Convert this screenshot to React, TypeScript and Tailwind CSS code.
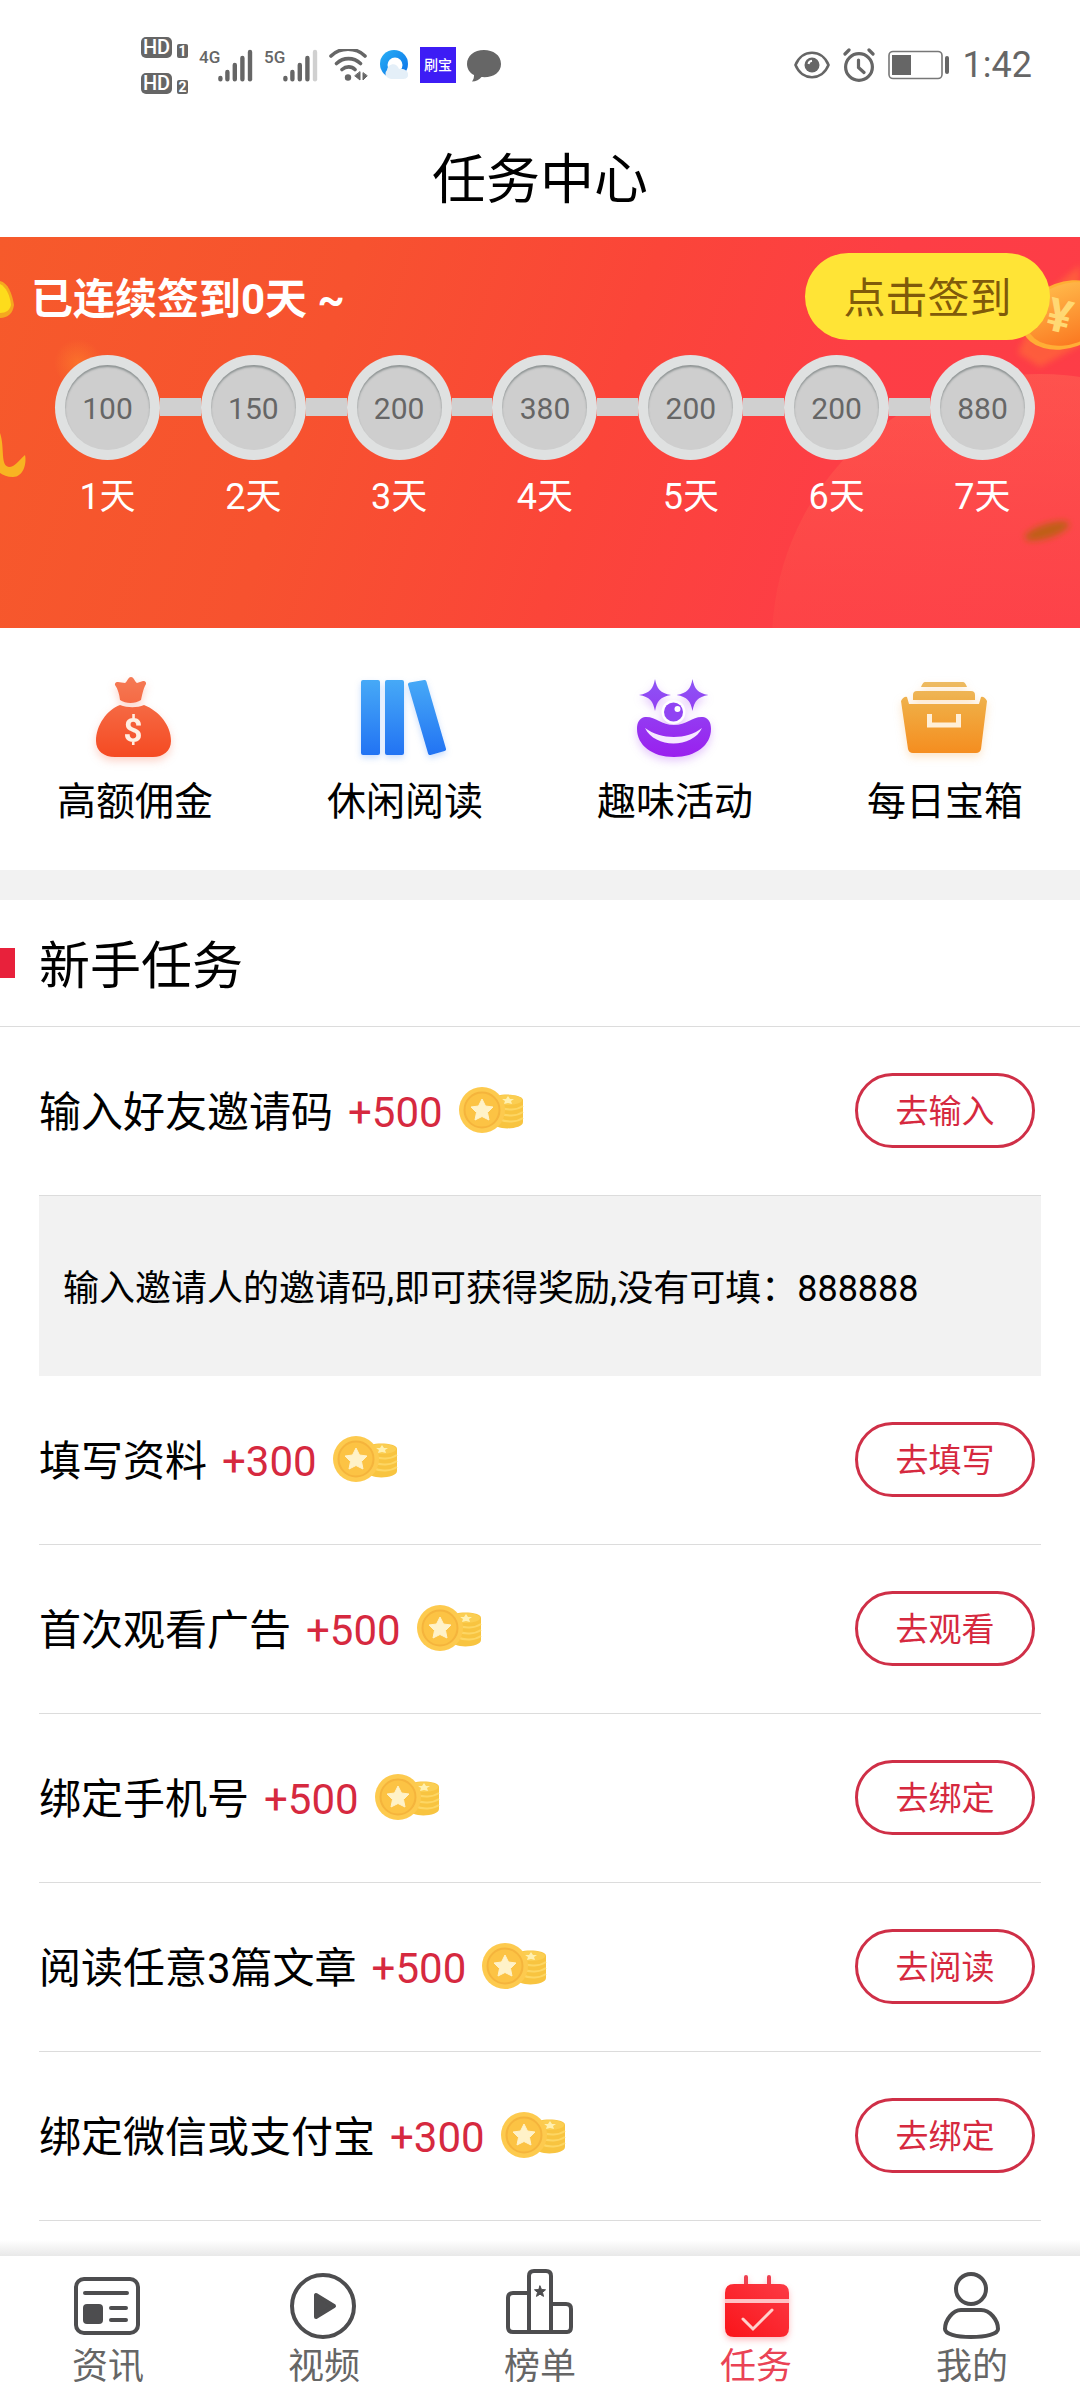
import clsx from "clsx";
import React from "react";

const checkInDays = [
  { day: 1, coins: 100 },
  { day: 2, coins: 150 },
  { day: 3, coins: 200 },
  { day: 4, coins: 380 },
  { day: 5, coins: 200 },
  { day: 6, coins: 200 },
  { day: 7, coins: 880 },
];

const tasks = [
  {
    name: "输入好友邀请码",
    reward: 500,
    action: "去输入",
    hint: "输入邀请人的邀请码,即可获得奖励,没有可填：888888",
  },
  { name: "填写资料", reward: 300, action: "去填写" },
  { name: "首次观看广告", reward: 500, action: "去观看" },
  { name: "绑定手机号", reward: 500, action: "去绑定" },
  { name: "阅读任意3篇文章", reward: 500, action: "去阅读" },
  { name: "绑定微信或支付宝", reward: 300, action: "去绑定" },
];

// --- Status bar ---
const SimBadge = ({ slot }: { slot: number }) => (
  <div className="flex items-end gap-[5px]">
    <span className="flex h-[21px] w-[31px] items-center justify-center rounded-[5px] bg-[#666] text-[20px] font-medium leading-none text-white">
      HD
    </span>
    <span className="flex h-[14px] w-[11px] items-center justify-center rounded-[2px] bg-[#666] text-[14px] font-bold leading-none text-white">
      {slot}
    </span>
  </div>
);

const Signal = ({ label, weak }: { label: string; weak?: boolean }) => (
  <div className="flex h-[33px] w-[54px] items-start justify-between text-[17px] font-medium leading-none">
    <span>{label}</span>
    <svg width="35" height="33" viewBox="0 0 35 33" className="-ml-1 shrink-0" strokeWidth="4.4" strokeLinecap="round" stroke="#666">
      <path d="M2.4 29v1.2M9.4 23v7.2M16.8 16v14.2M24.4 9v21.2" />
      <path d="M32 3v27.2" stroke={weak ? "#d0d0d0" : "#666"} />
    </svg>
  </div>
);

const StatusBar = () => (
  <div className="flex h-[118px] items-center justify-between pl-[141px] pr-[48px] pt-3 text-[#666]">
    <div className="flex items-center gap-[11px]">
      <div className="flex w-[47px] flex-col gap-[15px]">
        <SimBadge slot={1} />
        <SimBadge slot={2} />
      </div>
      <Signal label="4G" />
      <Signal label="5G" weak />
      <svg width="39" height="33" viewBox="0 0 39 33" fill="none" stroke="#666" strokeWidth="3.6" strokeLinecap="round">
        <path d="M2 7C11-2 27-2 36 7M7.5 14.500c7-6.500 17-6.500 24 0M13 20.500c4-3.500 9.500-3.500 13 0" />
        <circle cx="19" cy="28.500" r="3.200" fill="#666" stroke="none" />
        <path d="M31 23v8l-5-4zM34 24v7l4-4z" fill="#666" stroke="#666" strokeWidth="1" />
      </svg>
      <svg width="30" height="33" viewBox="0 0 30 33">
        <defs>
          <linearGradient id="ring" x1="0" y1="0" x2="1" y2="1">
            <stop offset="0" stopColor="#28b0f5" />
            <stop offset="1" stopColor="#0a6fe8" />
          </linearGradient>
        </defs>
        <circle cx="15" cy="15" r="14" fill="url(#ring)" />
        <circle cx="16" cy="16" r="7.500" fill="#fff" />
        <path d="M9 29a5 5 0 0 1-1-8c1-7 10-8 12-1 5-1 10 2 9 7-1 3-4 3-6 3H12z" fill="#e4eff8" />
      </svg>
      <span className="flex h-[36px] w-[36px] items-center justify-center bg-[#3d1cf5] text-[14px] font-medium leading-none text-white">
        刷宝
      </span>
      <svg width="34" height="33" viewBox="0 0 34 33" fill="#666">
        <path d="M17 1C7 1 0 7 0 15c0 5 3 9 7 11 0 3-.5 4.500-2 6.500 4 0 7.500-2 9.500-4.500 11 1 19.500-4 19.500-13S26 1 17 1z" />
      </svg>
    </div>

    <div className="flex items-center gap-[13px]">
      <svg width="36" height="28" viewBox="0 0 36 28" fill="none" stroke="#666" strokeWidth="2.600">
        <path d="M1.500 14C8-2.300 28-2.300 34.500 14 28 30.300 8 30.300 1.500 14z" />
        <circle cx="18" cy="14" r="7.500" fill="#666" stroke="none" />
        <path d="M14.500 13c.3-2 1.500-3 3.500-3.200" stroke="#fff" strokeWidth="2" />
      </svg>
      <svg width="32" height="34" viewBox="0 0 32 34" fill="none" stroke="#666" strokeWidth="3.200" strokeLinecap="round">
        <circle cx="16" cy="19" r="13.400" />
        <path d="M15.500 12v7.500l5.500 5M2 6l4-4M30 6l-4-4" />
      </svg>
      <svg width="62" height="30" viewBox="0 0 62 30">
        <rect x="1" y="1.500" width="53" height="27" rx="4" fill="none" stroke="#777" strokeWidth="1.600" />
        <rect x="4" y="5" width="19" height="20" fill="#666" />
        <rect x="57" y="6" width="4" height="18" rx="2" fill="#666" />
      </svg>
      <span className="text-[36px] leading-none">1:42</span>
    </div>
  </div>
);

// --- Check-in banner ---
const BannerArt = () => (
  <>
    <svg className="absolute left-0 top-0" width="140" height="391" viewBox="0 0 140 391">
      <defs>
        <radialGradient id="glow">
          <stop offset="0" stopColor="#ff8a2a" stopOpacity="0.500" />
          <stop offset="1" stopColor="#ff8a2a" stopOpacity="0" />
        </radialGradient>
      </defs>
      <circle cx="78" cy="126" r="24" fill="url(#glow)" />
      <path d="M0 44c8 2 12 12 14 24-1 8-6 13-14 13z" fill="#f5a81f" />
      <path d="M0 47c6 3 10 11 11 21-1 5-5 8-11 8z" fill="#fddc1c" />
      <path d="M0 196c5 14 0 33 9 34 6 0 9-6 16-12 2 9-2 22-12 22-6 0-10-2-13-4z" fill="#f8b422" />
    </svg>
    <svg className="absolute right-0 top-0" width="360" height="391" viewBox="0 0 360 391">
      <defs>
        <linearGradient id="hill" x1="0" y1="0" x2="0" y2="1">
          <stop offset="0" stopColor="#ff7a5a" stopOpacity="0.350" />
          <stop offset="0.550" stopColor="#ff6a50" stopOpacity="0.080" />
        </linearGradient>
        <linearGradient id="yen" x1="0" y1="0" x2="0" y2="1">
          <stop offset="0" stopColor="#ffb648" />
          <stop offset="1" stopColor="#fb7a22" />
        </linearGradient>
        <filter id="soft" x="-50%" y="-50%" width="200%" height="200%">
          <feGaussianBlur stdDeviation="3" />
        </filter>
      </defs>
      <circle cx="320" cy="405" r="268" fill="url(#hill)" />
      <path d="M322 60 360 28v80l-40 22-22-14z" fill="#ff8330" opacity="0.450" filter="url(#soft)" />
      <ellipse cx="346" cy="78" rx="46" ry="33" transform="rotate(-20 346 78)" fill="#ffae35" />
      <ellipse cx="348" cy="77" rx="43" ry="30" transform="rotate(-20 348 77)" fill="url(#yen)" />
      <text x="327" y="95" fontSize="46" fontWeight="bold" fill="#ffd873" transform="rotate(14 340 80)">
        ¥
      </text>
      <ellipse cx="327" cy="294" rx="23" ry="7" transform="rotate(-18 327 294)" fill="#bf5f18" filter="url(#soft)" />
    </svg>
  </>
);

const CheckInBanner = () => (
  <section className="relative overflow-hidden bg-[linear-gradient(108deg,#f65a2b_0%,#f7522f_30%,#fb4539_55%,#fd3e45_75%,#fd3c48_100%)] pb-[110px] pt-4 text-white">
    <BannerArt />
    <div className="relative flex items-center justify-between pl-[31px] pr-[30px]">
      <h2 className="pt-1.5 text-[42px] font-bold leading-none">已连续签到0天 ~</h2>
      <button type="button" className="h-[87px] w-[245px] rounded-full bg-[#ffe436] pt-1 text-[42px] leading-none text-[#805a0a]">
        点击签到
      </button>
    </div>
    <ol className="relative mt-[15px] flex pl-[55px] pr-[45px]">
      {checkInDays.map(({ day, coins }) => (
        <React.Fragment key={day}>
          {day > 1 && <li aria-hidden="true" className="mt-[43px] h-[18px] flex-1 bg-[#d0d0d0]" />}
          <li className="w-[105px] text-center">
            <div className="flex h-[105px] items-center justify-center rounded-full bg-[#dfe1e1]">
              <span className="flex h-[85px] w-[85px] items-center justify-center rounded-full bg-[#cecece] pt-0.5 text-[30px] leading-none text-[#666] shadow-[inset_0_2px_2px_#8f9595]">
                {coins}
              </span>
            </div>
            <p className="mt-4 text-[36px] leading-[42px]">{day}天</p>
          </li>
        </React.Fragment>
      ))}
    </ol>
  </section>
);

// --- Shortcut icons ---
const BagIcon = () => (
  <svg width="96" height="96" viewBox="0 0 96 96" className="drop-shadow-[0_4px_4px_rgba(245,80,40,0.25)]">
    <defs>
      <linearGradient id="bag" x1="0" y1="9" x2="0" y2="89" gradientUnits="userSpaceOnUse">
        <stop offset="0" stopColor="#f57a55" />
        <stop offset="1" stopColor="#f54a22" />
      </linearGradient>
    </defs>
    <path d="M28 17c-.5-2 1-3.500 3-3l7 1c2-1 3-6 6-6s4 5 6 6l6-2c2-.5 3.500 1 3 3-3 5-4 12-5 16-6 4-15 4-21 0-.5-5-2-11-5-15z" fill="url(#bag)" />
    <path d="M33 37c8 3 17 3 24 0 15 6 27 20 27 36 0 10-8 16-18 16H28c-11 0-19-6-19-16 0-16 11-31 24-36z" fill="url(#bag)" />
    <text x="46" y="74" textAnchor="middle" fontSize="33" fontWeight="bold" fill="#ffeee2">
      $
    </text>
  </svg>
);

const BooksIcon = () => (
  <svg width="96" height="96" viewBox="0 0 96 96" className="drop-shadow-[0_3px_3px_rgba(40,120,245,0.25)]">
    <defs>
      <linearGradient id="books" x1="0" y1="11" x2="0" y2="87" gradientUnits="userSpaceOnUse">
        <stop offset="0" stopColor="#47aaf7" />
        <stop offset="1" stopColor="#2273f3" />
      </linearGradient>
    </defs>
    <g fill="url(#books)" stroke="url(#books)" strokeWidth="4" strokeLinejoin="round">
      <path d="M6 14h15v71H6zM30 14h15v71H30zM53 16.500 67.500 14 87 81l-14 4z" />
    </g>
  </svg>
);

const ClownIcon = () => (
  <svg width="96" height="96" viewBox="0 0 96 96" className="drop-shadow-[0_4px_4px_rgba(150,40,240,0.25)]">
    <defs>
      <linearGradient id="clown" x1="0" y1="10" x2="0" y2="88" gradientUnits="userSpaceOnUse">
        <stop offset="0" stopColor="#8d55f5" />
        <stop offset="1" stopColor="#9a20ee" />
      </linearGradient>
    </defs>
    <g fill="url(#clown)">
      <path d="M28 11c2 10 5 14 16 16-11 2-14 6-16 16-2-10-5-14-16-16 11-2 14-6 16-16zM65.500 11c2 10 5 14 16 16-11 2-14 6-16 16-2-10-5-14-16-16 11-2 14-6 16-16z" />
      <path d="M18 49c10-1 16 8 29 8s19-9 29-8c6 1 8 6 8 12 0 16-15 28-37 28S10 77 10 61c0-6 2-11 8-12z" />
    </g>
    <circle cx="46.500" cy="44" r="12" fill="#fff" />
    <circle cx="46.500" cy="44" r="9.500" fill="#9044f3" />
    <circle cx="50.500" cy="41" r="3" fill="#fff" />
    <path d="M18 60c16 12 42 12 57 0-9 20-47 21-57 0z" fill="#f6e8ff" />
  </svg>
);

const ChestIcon = () => (
  <svg width="96" height="96" viewBox="0 0 96 96" className="drop-shadow-[0_4px_4px_rgba(245,150,40,0.25)]">
    <defs>
      <linearGradient id="chest" x1="0" y1="14" x2="0" y2="84" gradientUnits="userSpaceOnUse">
        <stop offset="0" stopColor="#edbb62" />
        <stop offset="0.350" stopColor="#f0ab42" />
        <stop offset="1" stopColor="#f58e20" />
      </linearGradient>
    </defs>
    <g fill="url(#chest)">
      <path d="M28 14h38q2 0 4 5H24q2-5 4-5zM20 23h54q4 0 4 4v5H16v-5q0-4 4-4z" />
      <path d="M4 33q3-5 6-4l2 7h70l2-7q3-1 6 4l-6 48q-1 4-5 4H16q-4 0-5-4z" />
    </g>
    <path d="M32.500 46v11h29V46" fill="none" stroke="#ffefd8" strokeWidth="5" />
  </svg>
);

const shortcuts = [
  { label: "高额佣金", Icon: BagIcon },
  { label: "休闲阅读", Icon: BooksIcon },
  { label: "趣味活动", Icon: ClownIcon },
  { label: "每日宝箱", Icon: ChestIcon },
];

const Shortcuts = () => (
  <section className="grid grid-cols-4 border-b-[30px] border-[#f2f2f2] pb-11 pt-10">
    {shortcuts.map(({ label, Icon }) => (
      <a key={label} href="#" className="flex flex-col items-center gap-3.5 text-[39px] leading-[48px]">
        <Icon />
        {label}
      </a>
    ))}
  </section>
);

// --- Task list ---
const CoinIcon = () => (
  <svg width="66" height="48" viewBox="0 0 66 48" className="shrink-0">
    <path d="M34 13c0-6 30-6 30 1v22c0 8-30 9-30 0z" fill="#f8c440" />
    <path d="M40 21c8 4 18 3 24-1M40 27c8 4 18 3 24-1M40 33c8 4 18 3 24-1" fill="none" stroke="#fdd663" strokeWidth="2" />
    <ellipse cx="49" cy="14" rx="14" ry="5" fill="#fbce52" />
    <path d="m49 10 2 3h4l-3 2 1 3-4-1-4 1 1-3-3-2h4z" fill="#fff0b0" />
    <circle cx="23" cy="24" r="23" fill="#fdca4e" />
    <circle cx="23" cy="24" r="17.500" fill="#fcc344" stroke="#f5b43c" strokeWidth="2" />
    <path d="m23 13 3.500 7 7.500 1-5.500 5.500L30 34l-7-3.500L16 34l1.500-7.500L12 21l7.500-1z" fill="#fff2c8" stroke="#fff2c8" strokeLinejoin="round" />
  </svg>
);

const TaskList = () => (
  <section>
    <div className="flex h-[127px] items-center gap-6 border-b border-[#dcdcdc]">
      <span className="h-[30px] w-[15px] bg-[#e8213b]" />
      <h2 className="pt-1.5 text-[51px] leading-none">新手任务</h2>
    </div>
    <ul className="px-[39px]">
      {tasks.map((task) => (
        <li key={task.name}>
          <div className="flex h-[169px] items-center justify-between border-b border-[#dcdcdc] pb-0.5 pr-[6px]">
            <div className="flex items-center gap-4 text-[42px] leading-none">
              <p className="flex items-center gap-[15px] pt-1.5">
                {task.name}
                <span className="text-[#d6293f]">+{task.reward}</span>
              </p>
              <CoinIcon />
            </div>
            <button type="button" className="h-[75px] w-[180px] rounded-full border-[3px] border-[#cf2f47] pt-0.5 text-[33px] leading-none text-[#d6293f]">
              {task.action}
            </button>
          </div>
          {task.hint && <p className="bg-[#f2f2f2] px-6 pb-[63px] pt-[69px] text-[36px] leading-[48px]">{task.hint}</p>}
        </li>
      ))}
    </ul>
  </section>
);

// --- Bottom tabs ---
const tabs = [
  {
    label: "资讯",
    icon: (
      <>
        <rect x="4" y="11" width="62" height="54" rx="8" />
        <path d="M13 25h42M39 40h15M39 52h15" />
        <rect x="11" y="36" width="20" height="20" rx="4" fill="#4d4d4f" stroke="none" />
      </>
    ),
  },
  {
    label: "视频",
    icon: (
      <>
        <circle cx="35" cy="38" r="31" />
        <path d="M28 27v22l18-11z" fill="#4d4d4f" strokeLinejoin="round" />
      </>
    ),
  },
  {
    label: "榜单",
    icon: (
      <>
        <path d="M25 64V8q0-5 5-5h12q5 0 5 5v56M25 25H9q-5 0-5 5v29q0 5 5 5h54q4 0 4-5V41q0-5-5-5H47" />
        <path d="m36 18 1.500 3.500 4 .3-3 2.600 1 4-3.500-2.200-3.500 2.200 1-4-3-2.600 4-.3z" fill="#4d4d4f" strokeWidth="1" />
      </>
    ),
  },
  {
    label: "任务",
    active: true,
    icon: (
      <>
        <path d="M26 9v9M49 9v9" stroke="#ee4050" />
        <path d="M14 16h46q9 0 9 9v35q0 9-9 9H14q-9 0-9-9V25q0-9 9-9z" fill="url(#calendar)" stroke="none" />
        <path d="M5 33h64" stroke="#ffc2c4" strokeLinecap="butt" />
        <path d="m23 51 10 10 19-19" stroke="#ffd0cc" strokeWidth="3" />
      </>
    ),
  },
  {
    label: "我的",
    icon: (
      <>
        <circle cx="35" cy="21" r="15" />
        <path d="M25 42h20c9 0 17 10 17 19 0 5-12 8-27 8S9 66 9 61c0-9 8-19 16-19z" />
      </>
    ),
  },
];

const TabBar = () => (
  <nav className="sticky bottom-0 mt-auto">
    <div className="h-4 bg-gradient-to-b from-transparent to-[#e8e8e8]" />
    <div className="grid grid-cols-5 bg-white pb-[11px] pt-3">
      {tabs.map(({ label, active, icon }) => (
        <a
          key={label}
          href="#"
          aria-current={active ? "page" : undefined}
          className={clsx("flex flex-col items-center gap-1.5 text-[36px] leading-[43px]", active ? "text-[#ea4355]" : "text-[#666]")}
        >
          <svg
            width="72"
            height="72"
            viewBox="0 0 72 72"
            fill="none"
            stroke="#4d4d4f"
            strokeWidth="4"
            strokeLinecap="round"
            className={active ? "drop-shadow-[0_3px_3px_rgba(245,40,50,0.3)]" : undefined}
          >
            <defs>
              <linearGradient id="calendar" x1="1" y1="0" x2="0" y2="1">
                <stop offset="0" stopColor="#fc3a45" />
                <stop offset="1" stopColor="#fa1419" />
              </linearGradient>
            </defs>
            {icon}
          </svg>
          {label}
        </a>
      ))}
    </div>
  </nav>
);

export default function App() {
  return (
    <div className="flex min-h-screen flex-col bg-white font-[Roboto,'Noto_Sans_CJK_SC',sans-serif] text-black">
      <header>
        <StatusBar />
        <h1 className="flex h-[119px] items-center justify-center pt-1.5 text-[54px] leading-none">任务中心</h1>
      </header>
      <main>
        <CheckInBanner />
        <Shortcuts />
        <TaskList />
      </main>
      <TabBar />
    </div>
  );
}
